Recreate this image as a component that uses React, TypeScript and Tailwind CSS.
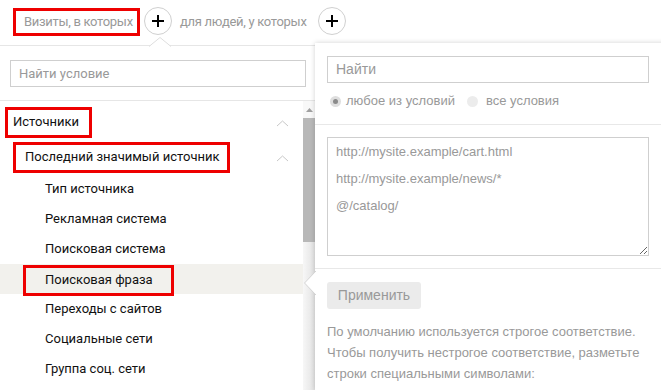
import React from "react";

const RED = "border-[3px] border-[#ee0000]";

function Plus() {
  return (
    <div className="w-[28px] h-[28px] rounded-full border border-[#d0d0d0] bg-white flex items-center justify-center shrink-0">
      <svg width="14" height="14" viewBox="0 0 14 14">
        <path d="M7 1V13M1 7H13" stroke="#000" strokeWidth="2" />
      </svg>
    </div>
  );
}

function Chevron() {
  return (
    <svg width="13" height="7" viewBox="0 0 13 7" className="shrink-0 mt-[3px]">
      <path d="M1 6L6.5 1L12 6" fill="none" stroke="#c8c8c8" strokeWidth="1" />
    </svg>
  );
}

const subItems = [
  "Тип источника",
  "Рекламная система",
  "Поисковая система",
  "Поисковая фраза",
  "Переходы с сайтов",
  "Социальные сети",
  "Группа соц. сети",
];

export default function App() {
  return (
    <div className="w-[661px] h-[390px] overflow-hidden bg-white relative font-['Roboto',sans-serif] text-[13px] text-[#111]">
      {/* top bar */}
      <div className="h-[46px] border-b border-[#e6e6e6] flex items-start pt-[8px] pl-[13px] relative tracking-[-0.3px]">
        <div className={`${RED} w-[127px] h-[28px] flex items-center pl-[8px] text-[#999] whitespace-nowrap`}>
          Визиты, в которых
        </div>
        <div className="ml-[4px] -mt-[1px]">
          <Plus />
        </div>
        <div className="ml-[8px] h-[28px] flex items-center text-[#999] whitespace-nowrap">
          для людей, у которых
        </div>
        <div className="ml-[11px] -mt-[1px]">
          <Plus />
        </div>
        <svg
          className="absolute left-[149px] top-[37px] z-10"
          width="22"
          height="10"
          viewBox="0 0 22 10"
        >
          <path d="M0 9.5L11 0.5L22 9.5Z" fill="#fff" />
          <path d="M0 9.5L11 0.5L22 9.5" fill="none" stroke="#dedede" strokeWidth="1" />
        </svg>
      </div>

      <div className="flex h-[344px]">
        {/* left panel */}
        <div className="w-[315px] shrink-0 flex flex-col">
          <div className="h-[55px] pt-[14px] pl-[10px] border-b border-[#e6e6e6] shrink-0">
            <div className="w-[296px] h-[27px] border border-[#cfcfcf] flex items-center pl-[8px] text-[#999]">
              Найти условие
            </div>
          </div>
          <div className="flex flex-1 min-h-0">
            <div className="w-[303px] pt-[6px]">
              <div className="h-[30px] flex items-center pl-[5px] pr-[14px] justify-between">
                <div className={`${RED} w-[87px] h-[31px] flex items-center pl-[5px] whitespace-nowrap`}>
                  Источники
                </div>
                <Chevron />
              </div>
              <div className="h-[30px] mt-[5px] flex items-center pl-[13px] pr-[14px] justify-between">
                <div className={`${RED} w-[217px] h-[31px] flex items-center pl-[9px] whitespace-nowrap`}>
                  Последний значимый источник
                </div>
                <Chevron />
              </div>
              <div className="mt-[2px]">
                {subItems.map((t) =>
                  t === "Поисковая фраза" ? (
                    <div key={t} className="h-[30px] flex items-center pl-[23px] bg-[#f2f1ed]">
                      <div className={`${RED} w-[151px] h-[31px] mt-[2px] flex items-center pl-[19px] whitespace-nowrap`}>
                        {t}
                      </div>
                    </div>
                  ) : (
                    <div key={t} className="h-[30px] flex items-center pl-[45px] whitespace-nowrap">
                      {t}
                    </div>
                  )
                )}
              </div>
            </div>
            {/* scrollbar */}
            <div className="w-[12px] flex flex-col bg-gradient-to-r from-[#f7f7f7] to-[#e2e2e2]">
              <div className="h-[17px] flex items-center justify-center bg-[#f8f8f8]">
                <svg width="7" height="4" viewBox="0 0 7 4">
                  <path d="M0 4L3.5 0L7 4Z" fill="#a0a0a0" />
                </svg>
              </div>
              <div className="h-[124px] bg-[#b8b8b8]" />
            </div>
          </div>
        </div>

        {/* right panel */}
        <div className="flex-1 -mt-[3px] relative z-20 bg-white shadow-[0_0_5px_rgba(0,0,0,0.18)] font-['Liberation_Sans',Arial,sans-serif] text-[13px] text-[#999]">
          <svg
            className="absolute -left-[11px] top-[228px]"
            width="12"
            height="24"
            viewBox="0 0 12 24"
          >
            <path d="M12 0L0.5 12L12 24Z" fill="#fff" />
            <path d="M12 0L0.5 12L12 24" fill="none" stroke="#d4d4d4" strokeWidth="1" />
          </svg>
          <div className="px-[12px] pt-[13px] pb-[10px] border-b border-[#e8e8e8]">
            <div className="w-[322px] h-[27px] border border-[#cfcfcf] flex items-center pl-[8px] text-[14px]">
              Найти
            </div>
            <div className="mt-[5px] h-[26px] flex items-center pl-[3px]">
              <div className="w-[11px] h-[11px] rounded-full bg-[#dedede] flex items-center justify-center">
                <div className="w-[5px] h-[5px] rounded-full bg-[#8a8a8a]" />
              </div>
              <span className="ml-[5px]">любое из условий</span>
              <div className="ml-[12px] w-[11px] h-[11px] rounded-full bg-[#ececec]" />
              <span className="ml-[8px]">все условия</span>
            </div>
          </div>
          <div className="px-[12px] pt-[12px] pb-[12px] border-b border-[#e8e8e8]">
            <textarea
              readOnly
              className="block w-[322px] h-[119px] border border-[#cfcfcf] pl-[8px] pt-0 leading-[27px] text-[#999] outline-none"
              value={"http://mysite.example/cart.html\nhttp://mysite.example/news/*\n@/catalog/"}
            />
          </div>
          <div className="px-[12px] pt-[13px]">
            <div className="w-[94px] h-[27px] rounded-[3px] bg-[#ebebeb] flex items-center justify-center text-[14px]">
              Применить
            </div>
            <p className="mt-[12px] leading-[21px] w-[330px]">
              По умолчанию используется строгое соответствие. Чтобы получить нестрогое соответствие, разметьте строки специальными символами:
            </p>
          </div>
        </div>
      </div>
    </div>
  );
}
